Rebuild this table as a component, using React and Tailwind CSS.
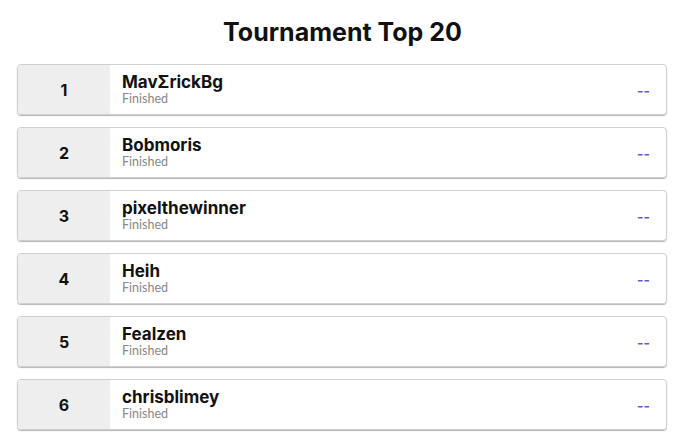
import React from "react";

const rows = [
  { rank: 1, name: "MavΣrickBg" },
  { rank: 2, name: "Bobmoris" },
  { rank: 3, name: "pixelthewinner" },
  { rank: 4, name: "Heih" },
  { rank: 5, name: "Fealzen" },
  { rank: 6, name: "chrisblimey" },
];

export default function App() {
  return (
    <div
      className="w-[685px] h-[448px] bg-white overflow-hidden"
      style={{ fontFamily: "Inter, 'Noto Sans', sans-serif" }}
    >
      <h1 className="pt-[16px] text-center text-[25px] leading-[32px] font-bold text-[#111]">
        Tournament Top 20
      </h1>
      <div className="mt-[16px] flex flex-col gap-[12px] pl-[17px] pr-[18px]">
        {rows.map((r) => (
          <div
            key={r.rank}
            className="flex h-[51px] rounded-[4px] border border-[#cfcfcf] overflow-hidden shadow-[0_1px_1px_#b5b5b5]"
          >
            <div className="w-[92px] shrink-0 bg-[#eeeeee] flex items-center justify-center text-[16px] font-bold text-[#111]">
              {r.rank}
            </div>
            <div className="flex-1 flex items-center pl-[12px] pr-[16px]">
              <div className="flex-1 flex flex-col pb-[2px]">
                <span className="text-[17px] leading-[20px] font-bold text-[#111]">
                  {r.name}
                </span>
                <span
                  className="text-[12.5px] leading-[13px] text-[#888888]"
                  style={{ fontFamily: "Lato, sans-serif" }}
                >
                  Finished
                </span>
              </div>
              <span className="text-[14px] font-semibold text-[#5f58d4] pt-[2px]">--</span>
            </div>
          </div>
        ))}
      </div>
    </div>
  );
}
